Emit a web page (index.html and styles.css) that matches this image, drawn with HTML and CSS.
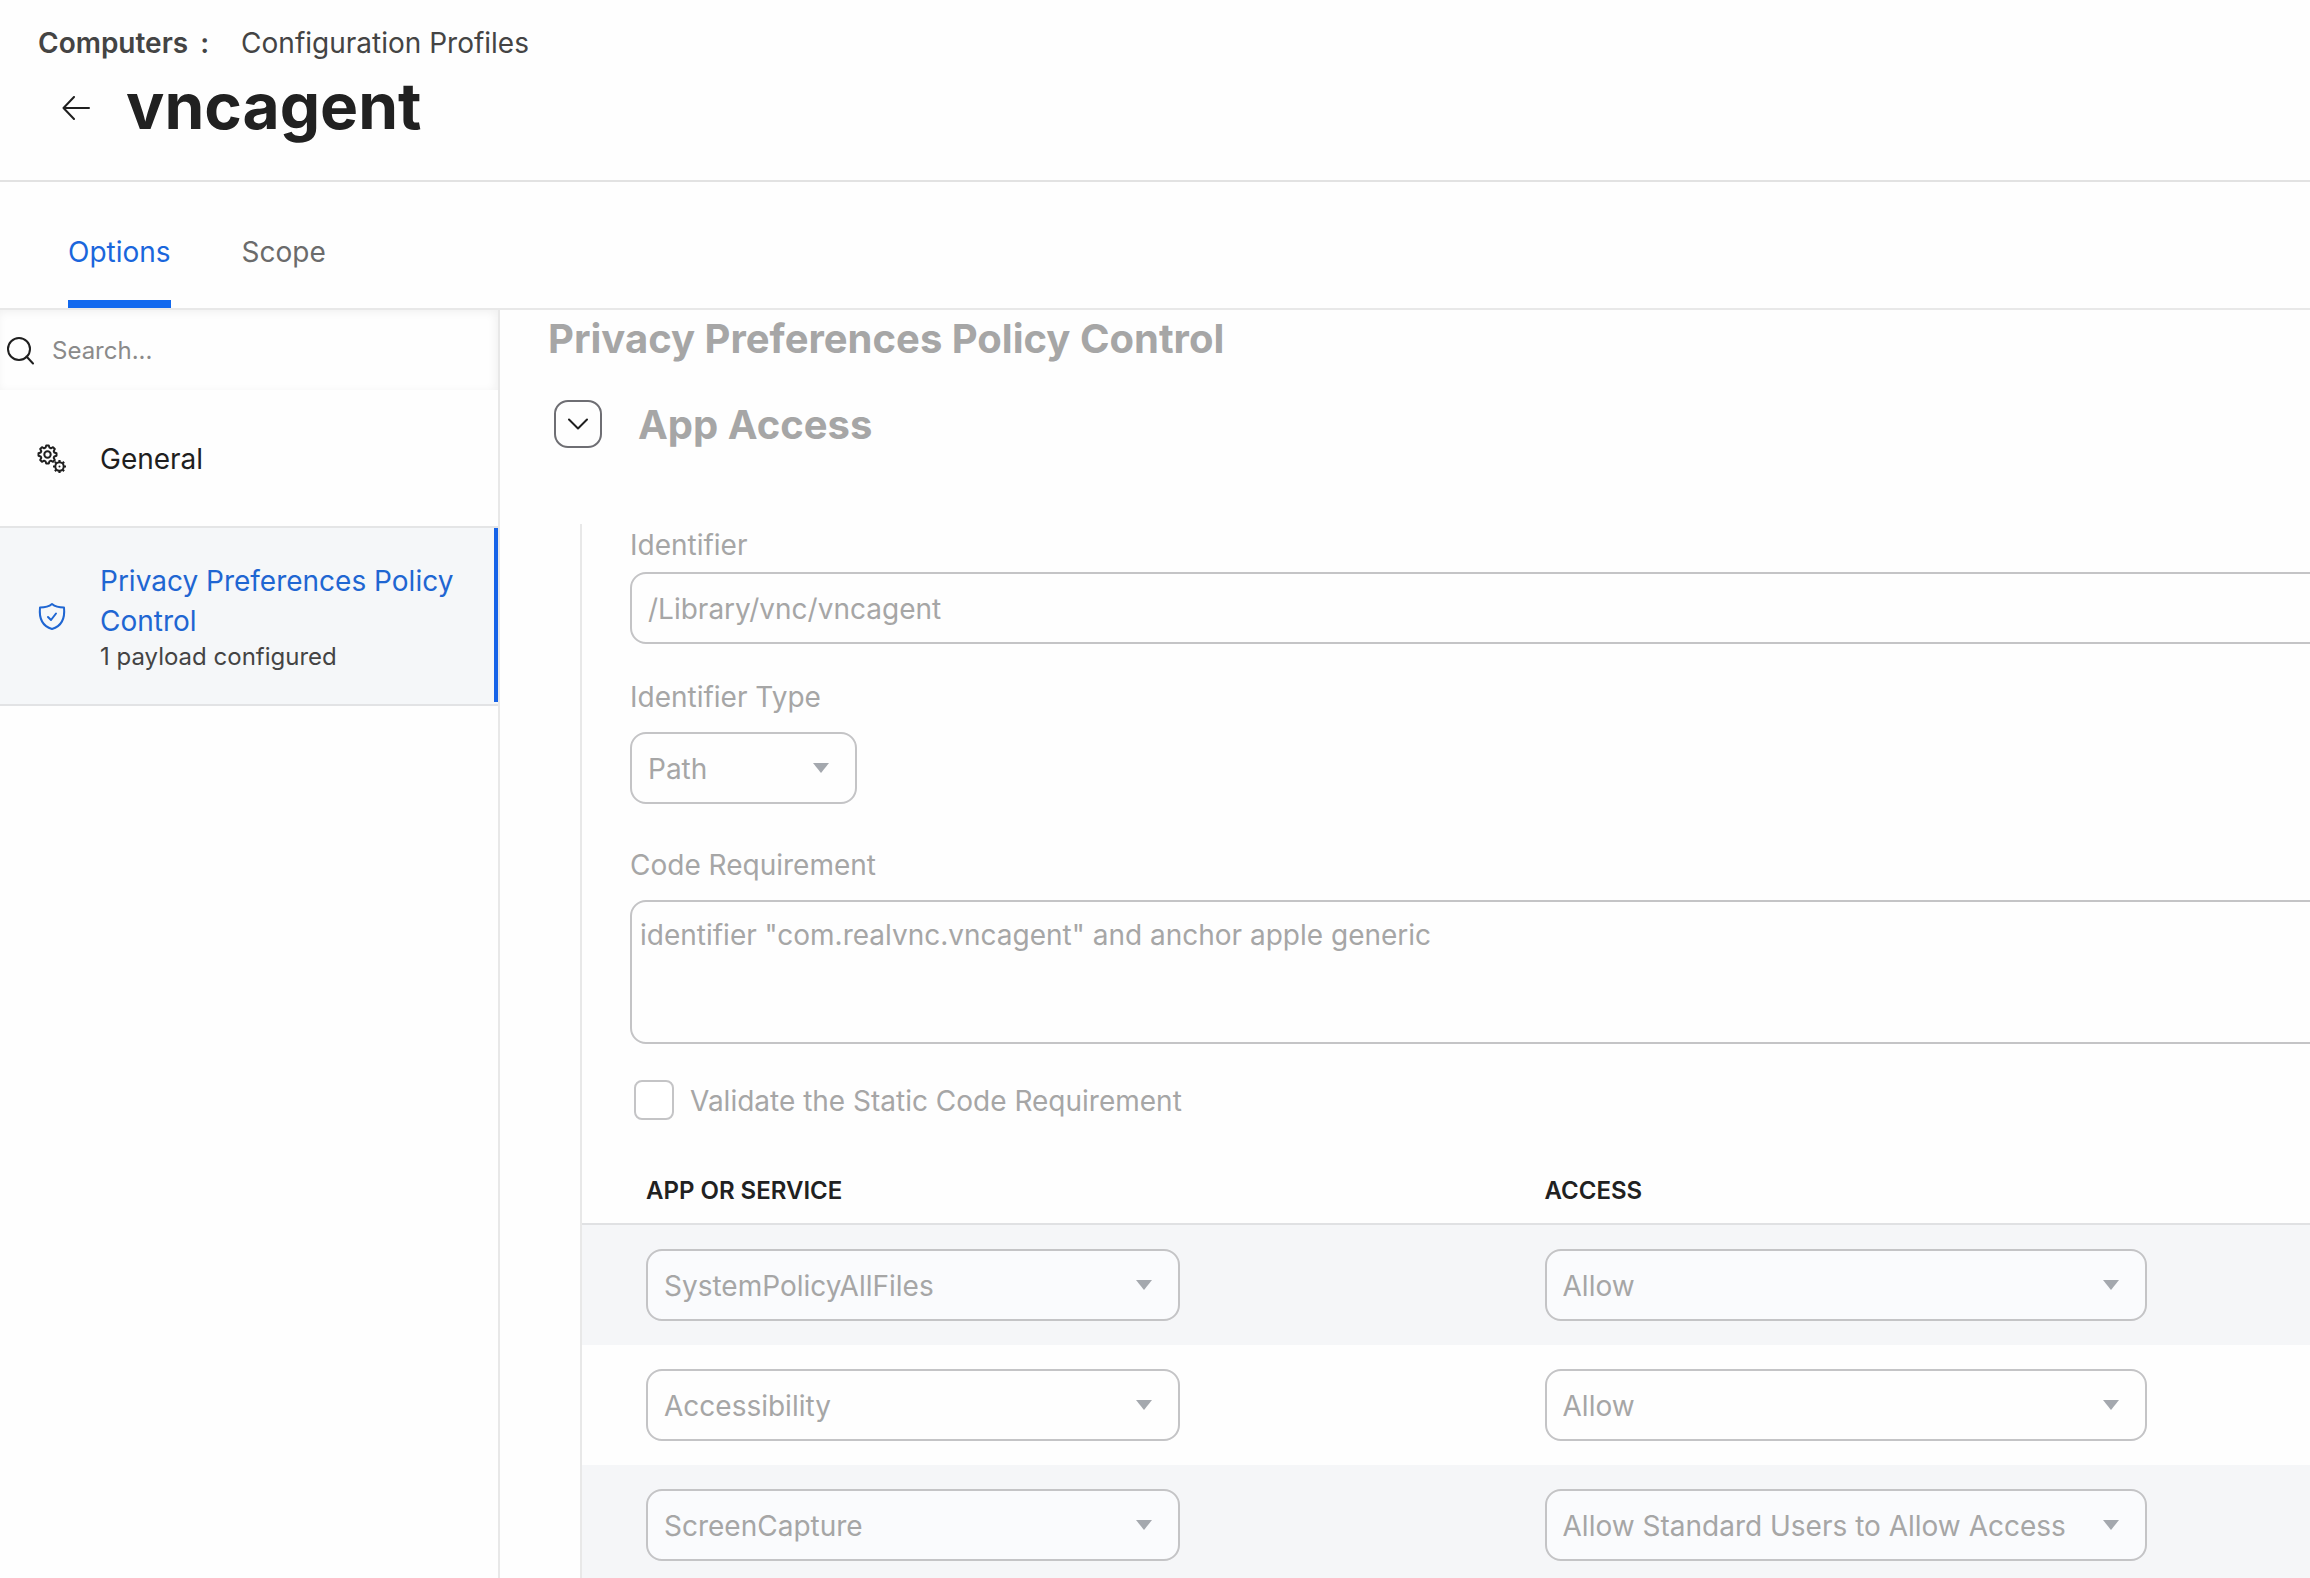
FILE: index.html
```
<!DOCTYPE html>
<html lang="en">
<head>
<meta charset="utf-8">
<title>vncagent</title>
<link rel="stylesheet" href="styles.css">
</head>
<body>
<div class="app">
  <header class="header">
    <nav class="breadcrumb" aria-label="Breadcrumb">
      <span class="crumb-root"><b>Computers</b><b>:</b></span>
      <a href="#profiles">Configuration Profiles</a>
    </nav>
    <div class="title-row">
      <a class="back" href="#back" aria-label="Back">
        <svg width="28" height="24" viewBox="0 0 28 24" fill="none" stroke="currentColor" stroke-width="2" stroke-linecap="round" stroke-linejoin="round"><path d="M27 12H2M12 1L1.5 12L12 23"/></svg>
      </a>
      <h1>vncagent</h1>
    </div>
  </header>

  <nav class="tabs" aria-label="Sections">
    <a class="tab active" href="#options">Options</a>
    <a class="tab" href="#scope">Scope</a>
  </nav>

  <div class="body">
    <aside class="sidebar">
      <label class="search">
        <svg width="28" height="28" viewBox="0 0 28 28" fill="none" stroke="currentColor" stroke-width="2" stroke-linecap="round"><circle cx="13" cy="12" r="11"/><path d="M20.500 19.500L27 26.500"/></svg>
        <input type="search" placeholder="Search..." aria-label="Search payloads">
      </label>
      <a class="payload" href="#general">
        <svg width="30" height="30" viewBox="0 0 30 30" fill="none" stroke="currentColor" stroke-width="2" stroke-linejoin="round"><path d="M9.2 1.5h2.6l.7 2.2 1.4.6 2.1-1.1 1.8 1.8-1.1 2.1.6 1.4 2.2.7v2.6l-2.2.7-.6 1.4 1.1 2.1-1.8 1.8-2.1-1.1-1.4.6-.7 2.2H9.2l-.7-2.2-1.4-.6-2.1 1.1L3.2 16l1.1-2.1-.6-1.4-2.2-.7V9.2l2.2-.7.6-1.4L3.2 5 5 3.2l2.1 1.1 1.4-.6z"/><circle cx="10.5" cy="10.5" r="3.2"/><circle cx="22.5" cy="22.5" r="4.2"/><circle cx="22.5" cy="22.5" r="1" fill="currentColor" stroke="none"/><path stroke-width="2.2" d="M22.5 18v-2M22.5 29v-2M18 22.5h-2M29 22.5h-2M19.3 19.3l-1.400-1.400M25.700 25.700l1.400 1.400M25.700 19.300l1.400-1.400M19.300 25.700l-1.400 1.400"/></svg>
        <span class="payload-name">General</span>
      </a>
      <a class="payload selected" href="#pppc">
        <svg width="30" height="30" viewBox="0 0 30 30" fill="none" stroke="currentColor" stroke-width="2" stroke-linecap="round" stroke-linejoin="round"><path d="M15 2C18 4.500 22 5.500 27 5.500C28.200 17 25 24 15 27C5 24 1.800 17 3 5.500C8 5.500 12 4.500 15 2Z"/><path d="M11 15L14 18L19 11.500"/></svg>
        <span>
          <span class="payload-name">Privacy Preferences Policy Control</span>
          <span class="payload-note">1 payload configured</span>
        </span>
      </a>
    </aside>

    <main class="main">
      <h2>Privacy Preferences Policy Control</h2>
      <div class="section-head">
        <button class="toggle" type="button" aria-label="Collapse App Access">
          <svg width="20" height="12" viewBox="0 0 20 12" fill="none" stroke="currentColor" stroke-width="2" stroke-linecap="round" stroke-linejoin="round"><path d="M1 1.500L10 10.500L19 1.500"/></svg>
        </button>
        <h3>App Access</h3>
      </div>

      <form class="panel">
        <div class="fields">
          <label for="identifier">Identifier</label>
          <input class="control bleed" id="identifier" type="text" value="/Library/vnc/vncagent" disabled>

          <label class="spaced" for="type">Identifier Type</label>
          <div class="select narrow">
            <select class="control" id="type" disabled><option>Path</option></select>
            <svg width="16" height="10" viewBox="0 0 16 10"><path d="M0 0H16L8 10Z" fill="currentColor"/></svg>
          </div>

          <label class="spaced-lg" for="code">Code Requirement</label>
          <textarea class="control bleed" id="code" disabled>identifier "com.realvnc.vncagent" and anchor apple generic</textarea>

          <label class="check"><input type="checkbox" disabled><span>Validate the Static Code Requirement</span></label>
        </div>

        <table>
          <thead>
            <tr><th>APP OR SERVICE</th><th>ACCESS</th></tr>
          </thead>
          <tbody>
            <tr>
              <td><div class="select service"><select class="control" aria-label="App or service 1" disabled><option>SystemPolicyAllFiles</option></select><svg width="16" height="10" viewBox="0 0 16 10"><path d="M0 0H16L8 10Z" fill="currentColor"/></svg></div></td>
              <td><div class="select access"><select class="control" aria-label="Access 1" disabled><option>Allow</option></select><svg width="16" height="10" viewBox="0 0 16 10"><path d="M0 0H16L8 10Z" fill="currentColor"/></svg></div></td>
            </tr>
            <tr>
              <td><div class="select service"><select class="control" aria-label="App or service 2" disabled><option>Accessibility</option></select><svg width="16" height="10" viewBox="0 0 16 10"><path d="M0 0H16L8 10Z" fill="currentColor"/></svg></div></td>
              <td><div class="select access"><select class="control" aria-label="Access 2" disabled><option>Allow</option></select><svg width="16" height="10" viewBox="0 0 16 10"><path d="M0 0H16L8 10Z" fill="currentColor"/></svg></div></td>
            </tr>
            <tr>
              <td><div class="select service"><select class="control" aria-label="App or service 3" disabled><option>ScreenCapture</option></select><svg width="16" height="10" viewBox="0 0 16 10"><path d="M0 0H16L8 10Z" fill="currentColor"/></svg></div></td>
              <td><div class="select access"><select class="control" aria-label="Access 3" disabled><option>Allow Standard Users to Allow Access</option></select><svg width="16" height="10" viewBox="0 0 16 10"><path d="M0 0H16L8 10Z" fill="currentColor"/></svg></div></td>
            </tr>
          </tbody>
        </table>
      </form>
    </main>
  </div>
</div>
</body>
</html>
```
FILE: styles.css
```
* { box-sizing: border-box; }

body {
  margin: 0;
  background: #fefefe;
  color: #1f1f1f;
  font-family: Inter, "Liberation Sans", sans-serif;
  font-size: 28px;
  line-height: 40px;
}

a { color: inherit; text-decoration: none; }
h1, h2, h3 { margin: 0; font-weight: 700; }
svg { display: block; flex: none; }
input, select, textarea, button { font: inherit; color: inherit; }

.app { display: flex; flex-direction: column; height: 100vh; overflow: hidden; }

.header { flex: none; padding: 23px 38px 34px; border-bottom: 2px solid #e2e2e2; }
.breadcrumb { display: flex; gap: 32px; color: #444; }
.crumb-root { display: flex; gap: 12px; }
.crumb-root b { font-weight: 600; }
.title-row { display: flex; align-items: center; gap: 36px; padding-left: 24px; }
.back { padding-top: 6px; }
.title-row h1 { font-size: 64px; line-height: 80px; color: #212121; margin-top: 3px; }

.tabs { flex: none; display: flex; gap: 71px; padding: 0 68px; border-bottom: 2px solid #e8e8e8; }
.tab { padding: 50px 0 28px; border-bottom: 8px solid transparent; color: #6b6b6b; }
.tab.active { color: #1a66dc; border-bottom-color: #1168ee; }

.body { flex: 1; display: flex; min-height: 0; }

.sidebar { flex: none; width: 500px; border-right: 2px solid #e8e8e8; }
.search {
  display: flex; align-items: center; gap: 18px;
  height: 80px; padding: 1px 6px 0;
  box-shadow: inset -2px 2px 10px rgba(0, 0, 0, .06);
}
.search input { flex: 1; min-width: 0; border: 0; padding: 0; background: none; font-size: 24px; outline: 0; appearance: none; }
.search input::placeholder { color: #8a8a8a; opacity: 1; }
.payload {
  display: flex; align-items: center; gap: 33px;
  padding: 49px 32px 47px 37px; border-bottom: 2px solid #e4e5e6;
}
.payload.selected {
  padding: 33px 36px 31px 37px; color: #1f66d2; border-bottom-color: #e2e3e5;
  background: linear-gradient(#1663e8, #1663e8) right top / 4px calc(100% - 2px) no-repeat #f5f7f9;
}
.payload-name, .payload-note { display: block; }
.payload-note { font-size: 24px; color: #444; line-height: 32px; }

.main { flex: 1; min-width: 0; overflow: hidden; padding-left: 48px; }
.main h2, .main h3 { font-size: 40px; line-height: 58px; color: #a6a6a6; }
.section-head { display: flex; align-items: center; gap: 36px; padding: 26px 0 70px 6px; }
.section-head h3 { padding-top: 2px; }
.toggle {
  display: grid; place-items: center; width: 48px; height: 48px; padding: 0;
  border: 2px solid #6e6e73; border-radius: 14px; background: none;
}

.panel { margin-left: 32px; border-left: 2px solid #e8e8e8; color: #a6a6a6; }
.fields { display: flex; flex-direction: column; padding: 1px 0 32px 48px; }
.fields label { margin-bottom: 7px; }
.fields .spaced { margin: 33px 0 15px; }
.fields .spaced-lg { margin: 41px 0 15px; }
.control {
  height: 72px; padding: 2px 16px 0; border: 2px solid #c4c4c6; border-radius: 16px;
  background: #fefefe; color: #a6a6a6; opacity: 1; appearance: none; outline: 0;
}
.bleed { margin-right: -24px; }
textarea.control { height: 144px; padding: 13px 8px; resize: none; overflow: hidden; }
.select { display: grid; align-items: center; }
.select > * { grid-area: 1 / 1; }
.select svg { justify-self: end; margin-right: 28px; color: #a4a8ae; pointer-events: none; }
.narrow { width: 227px; }
.service { width: 534px; }
.access { width: 602px; }
.fields .check { display: flex; align-items: center; gap: 16px; margin: 35px 0 0 4px; }
.check span { padding-top: 2px; }
.check input { width: 40px; height: 40px; margin: 0; border: 2px solid #c4c4c6; border-radius: 8px; background: #fff; appearance: none; }

table { width: 100%; border-collapse: separate; border-spacing: 0; table-layout: fixed; }
th {
  padding: 18px 0 12px 64px; border-bottom: 2px solid #e0e1e3; color: #212121;
  font-size: 24px; font-weight: 600; text-align: left;
}
th:first-child { width: 52%; }
td { padding: 24px 0 24px 64px; }
tbody tr:nth-child(odd) { background: #f5f6f8; }
tbody tr:nth-child(odd) .control { background: #fafbfd; }
```
